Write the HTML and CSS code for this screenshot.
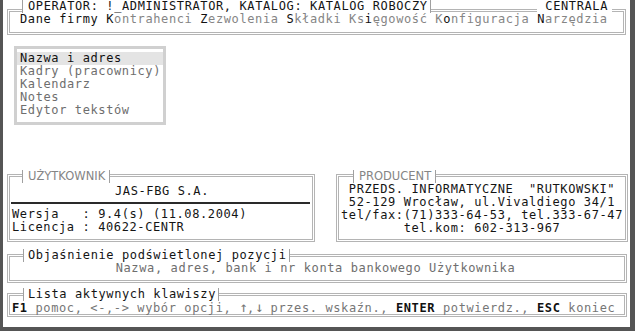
FILE: index.html
```html
<!DOCTYPE html>
<html lang="pl">
<head>
  <meta charset="UTF-8" />
  <title>Dane firmy</title>
  <link rel="stylesheet" href="styles.css">
</head>
<body>
  <div class="screen">
    <div class="box top-box">
      <div class="box-head">
        <span class="rule rule-start"></span>
        <span class="caption">OPERATOR: !_ADMINISTRATOR, KATALOG: KATALOG ROBOCZY</span>
        <span class="rule"></span>
        <span class="head-right">CENTRALA</span>
        <span class="rule rule-end short"></span>
      </div>
      <div class="box-body menu-bar"><span class="hot">Dane firmy</span> <span class="hot">K</span>ontrahenci <span class="hot">Z</span>ezwolenia <span class="hot">S</span>kładki Ks<span class="hot">i</span>ęgowość K<span class="hot">o</span>nfiguracja <span class="hot">N</span>arzędzia</div>
    </div>

    <div class="submenu">
      <div class="item selected">Nazwa i adres</div>
      <div class="item">Kadry (pracownicy)</div>
      <div class="item">Kalendarz</div>
      <div class="item">Notes</div>
      <div class="item">Edytor tekstów</div>
    </div>

    <div class="info-row">
      <div class="box user-box">
        <div class="box-head">
          <span class="rule rule-start"></span>
          <span class="caption soft">UŻYTKOWNIK</span>
          <span class="rule rule-end"></span>
        </div>
        <div class="box-body user-body">
          <div class="line center">JAS-FBG S.A.</div>
          <div class="bar"></div>
          <div class="line">Wersja   : 9.4(s) (11.08.2004)</div>
          <div class="line">Licencja : 40622-CENTR</div>
        </div>
      </div>
      <div class="box producer-box">
        <div class="box-head">
          <span class="rule rule-start"></span>
          <span class="caption soft">PRODUCENT</span>
          <span class="rule rule-end"></span>
        </div>
        <div class="box-body producer-body">
          <div class="line">PRZEDS. INFORMATYCZNE  "RUTKOWSKI"</div>
          <div class="line">52-129 Wrocław, ul.Vivaldiego 34/1</div>
          <div class="line">tel/fax:(71)333-64-53, tel.333-67-47</div>
          <div class="line">tel.kom: 602-313-967</div>
        </div>
      </div>
    </div>

    <div class="box hint-box">
      <div class="box-head">
        <span class="rule rule-start"></span>
        <span class="caption">Objaśnienie podświetlonej pozycji</span>
        <span class="rule rule-end"></span>
      </div>
      <div class="box-body hint-body">Nazwa, adres, bank i nr konta bankowego Użytkownika</div>
    </div>

    <div class="box keys-box">
      <div class="box-head">
        <span class="rule rule-start"></span>
        <span class="caption">Lista aktywnych klawiszy</span>
        <span class="rule rule-end"></span>
      </div>
      <div class="box-body keys-body"><b>F1</b> pomoc, &lt;-,-&gt; wybór opcji, <span class="arrow">↑</span>,<span class="arrow">↓</span> przes. wskaźn., <b>ENTER</b> potwierdz., <b>ESC</b> koniec</div>
    </div>
  </div>
</body>
</html>
```

FILE: styles.css
```css
* {
  box-sizing: border-box;
}
body {
  margin: 0;
  background: #fff;
}
.screen {
  width: 635px;
  height: 331px;
  border-left: 3px solid #555;
  border-right: 5px solid #555;
  border-bottom: 4px solid #555;
  background: #fff;
  display: flex;
  flex-direction: column;
  font-family: "DejaVu Sans Mono", monospace;
  font-size: 12px;
  letter-spacing: 0.61px;
  line-height: 13px;
  color: #141414;
}
.caption,
.head-right,
.menu-bar,
.item,
.line,
.hint-body,
.keys-body {
  white-space: pre;
}

/* boxes drawn like text-mode frames */
.box {
  display: flex;
  flex-direction: column;
  margin: 0 3px 0 4px;
}
.box-head {
  display: flex;
  height: 13px;
}
.rule {
  flex: 1;
  margin-top: 5px;
  border-top: 3px double #b4b4b4;
}
.rule-start {
  flex: none;
  width: 16px;
  border-left: 3px double #b4b4b4;
}
.rule-end {
  border-right: 3px double #b4b4b4;
}
.rule-end.short {
  flex: none;
  width: 14px;
}
.caption {
  padding: 0 2px 0 4px;
  border-left: 1px solid #a0a0a0;
  border-right: 1px solid #a0a0a0;
}
.caption.soft {
  font-family: "DejaVu Sans", sans-serif;
  font-size: 11.5px;
  letter-spacing: 0;
  color: #858585;
  padding: 0 4px 0 5px;
}
.head-right {
  margin: 0 4px 0 8px;
}
.box-body {
  border: 3px double #b4b4b4;
  border-top: 0;
}

/* top menu */
.top-box {
  margin-right: 4px;
}
.top-box .rule {
  margin-top: 9px;
}
.top-box .rule-start {
  width: 15px;
}
.top-box .caption {
  padding-left: 5px;
}
.menu-bar {
  padding: 0 0 6px 10px;
  color: #858585;
}
.hot {
  color: #111;
}

/* drop-down */
.submenu {
  width: 152px;
  margin: 11px 0 0 11px;
  padding: 3px 0 5px;
  border: 3px solid #d0d0d0;
  color: #6e6e6e;
}
.item {
  height: 13px;
  padding-left: 3px;
}
.item.selected {
  background: #e4e4e4;
  color: #111;
}

/* user / producer */
.info-row {
  display: flex;
  gap: 21px;
  height: 72px;
  margin: 45px 0 0 4px;
}
.info-row .box {
  margin: 0;
}
.info-row .rule {
  margin-top: 4px;
}
.user-box {
  width: 308px;
}
.user-box .rule-start {
  width: 15px;
}
.producer-box {
  width: 292px;
}
.producer-box .rule-start {
  width: 17px;
}
.user-body {
  flex: 1;
  padding: 2px 0 0 2px;
}
.center {
  text-align: center;
}
.bar {
  height: 2px;
  margin: 4px 2px 4px -1px;
  background: #2a2a2a;
}
.producer-body {
  flex: 1;
  text-align: center;
}

/* hint and keys */
.hint-box {
  margin-top: 7px;
}
.hint-body {
  padding: 0 3px 5px 0;
  text-align: center;
  color: #6e6e6e;
}
.keys-box {
  margin-top: 5px;
}
.keys-body {
  line-height: 12px;
  padding-left: 2px;
  color: #767676;
}
.keys-body b {
  color: #111;
}
.arrow {
  font-size: 14px;
  letter-spacing: -0.6px;
}
```
